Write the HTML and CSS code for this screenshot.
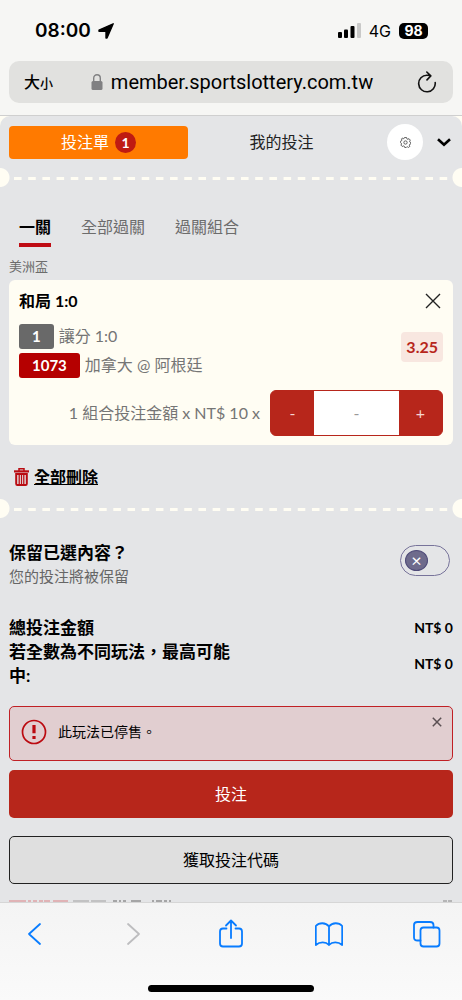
FILE: index.html
```html
<!DOCTYPE html>
<html lang="zh-Hant-TW">
<head>
<meta charset="UTF-8">
<meta name="viewport" content="width=device-width, initial-scale=1">
<title>投注單</title>
<link rel="stylesheet" href="styles.css">
</head>
<body>
  <header class="browser-top">
    <div class="status-bar">
      <div class="status-left">
        <span class="clock">08:00</span>
        <svg width="16" height="16" viewBox="0 0 16 16" aria-hidden="true"><path d="M15.200.8 9 15H8V8.200H1V7.100z" fill="#000" stroke="#000" stroke-width="1.400" stroke-linejoin="round"/></svg>
      </div>
      <div class="status-right">
        <svg width="23" height="15" viewBox="0 0 23 15" aria-hidden="true">
          <rect x="0" y="9" width="4" height="6" rx="1"/>
          <rect x="6" y="6.500" width="4" height="8.500" rx="1"/>
          <rect x="12.500" y="3" width="4" height="12" rx="1"/>
          <rect x="19" y="0" width="4" height="15" rx="1" fill="#c9c9c8"/>
        </svg>
        <span class="network">4G</span>
        <span class="battery">98</span>
      </div>
    </div>
    <div class="address-bar">
      <button class="text-size" aria-label="文字大小">大<small>小</small></button>
      <button class="address">
        <svg width="12" height="16" viewBox="0 0 12 16" aria-hidden="true"><path d="M2.700 7.500V4.300C2.700 2 4.100.8 6 .8s3.300 1.200 3.300 3.500v3.200" fill="none" stroke="#808082" stroke-width="1.400"/><rect x=".5" y="7" width="11" height="9" rx="1.500" fill="#808082"/></svg>
        <span>member.sportslottery.com.tw</span>
      </button>
      <button class="reload" aria-label="重新載入">
        <svg width="20" height="22" viewBox="0 0 20 22" fill="none" stroke="#111" stroke-width="1.600" stroke-linecap="round" stroke-linejoin="round"><path d="M18.200 11.500A8.300 8.300 0 1 1 9.900 4.200q2 0 3.400.4M9.800 1l4 3.900-3.800 4"/></svg>
      </button>
    </div>
  </header>

  <main class="slip-wrap">
    <div class="slip">
      <div class="slip-head">
        <div class="main-tabs">
          <button class="main-tab active">投注單 <span class="count">1</span></button>
          <button class="main-tab">我的投注</button>
        </div>
        <button class="settings" aria-label="設定">
          <svg width="11" height="11" viewBox="0 0 20 20" fill="none" stroke="#555" stroke-width="1.700" stroke-linejoin="round"><path d="M8 1h4l.6 2.500 1.500.7L16.400 3l2.300 2.700-1.200 2 .3 1.500 2 1v2.200l-2.200.9-.7 1.600 1 2.100-2.600 2-1.900-1.200-1.500.5L11.200 19H8.500l-.7-2.200-1.600-.6L4 17.200l-2.300-2.500 1.100-2-.5-1.500L.8 10V7.800l2-.8.7-1.600-.9-2L5.200 2l1.500 1.400z"/><circle cx="10" cy="10" r="3"/></svg>
        </button>
        <button class="collapse" aria-label="收合">
          <svg width="14" height="9" viewBox="0 0 14 9" fill="none" stroke="#000" stroke-width="2.600"><path d="M1 1.200l6 5.600 6-5.600"/></svg>
        </button>
      </div>

      <div class="perforation"></div>

      <nav class="sub-tabs">
        <a href="#single" class="active">一關</a>
        <a href="#all">全部過關</a>
        <a href="#combo">過關組合</a>
      </nav>

      <p class="league">美洲盃</p>
      <section class="bet-card">
        <div class="bet-title">
          <h2>和局 1:0</h2>
          <button aria-label="移除">
            <svg width="20" height="20" viewBox="0 0 20 20" stroke="#222" stroke-width="1.400"><path d="M3 3l14 14M17 3L3 17"/></svg>
          </button>
        </div>
        <div class="bet-body">
          <div class="bet-lines">
            <div class="bet-line"><span class="chip">1</span>讓分 1:0</div>
            <div class="bet-line"><span class="chip code">1073</span>加拿大 @ 阿根廷</div>
          </div>
          <span class="odds">3.25</span>
        </div>
        <div class="stake">
          <label for="stake">1 組合投注金額 x NT$ 10 x</label>
          <div class="stepper">
            <button aria-label="減少">-</button>
            <input id="stake" type="text" placeholder="-">
            <button aria-label="增加">+</button>
          </div>
        </div>
      </section>

      <button class="clear-all">
        <svg width="15" height="18" viewBox="0 0 15 18" fill="none" stroke="#b90c12"><path d="M0 3.400h15" stroke-width="2.200"/><path d="M5 3V.8h5V3" stroke-width="1.500"/><path d="M2.200 6v9.800q0 1.200 1.200 1.200h8.200q1.200 0 1.200-1.200V6z" stroke-width="2"/><path d="M5.200 7v9M7.500 7v9M9.800 7v9" stroke-width="1.300"/></svg>
        <span>全部刪除</span>
      </button>

      <div class="perforation"></div>

      <div class="keep">
        <label for="keep">
          <strong>保留已選內容？</strong>
          <span>您的投注將被保留</span>
        </label>
        <input id="keep" class="switch" type="checkbox" role="switch">
      </div>

      <dl class="totals">
        <div><dt>總投注金額</dt><dd>NT$ 0</dd></div>
        <div><dt>若全數為不同玩法，最高可能中:</dt><dd>NT$ 0</dd></div>
      </dl>

      <div class="alert" role="alert">
        <svg width="26" height="26" viewBox="0 0 26 26"><circle cx="13" cy="13" r="11.500" fill="none" stroke="#bb0a10" stroke-width="1.700"/><path d="M11.400 6h3.200v8.200h-3.200zM11.400 17h3.200v3h-3.200z" fill="#bb0a10"/></svg>
        <span>此玩法已停售。</span>
        <button aria-label="關閉">
          <svg width="10" height="10" viewBox="0 0 10 10" stroke="#5b5053" stroke-width="1.500"><path d="M.8.8l8.400 8.400M9.200.8L.8 9.200"/></svg>
        </button>
      </div>

      <button class="btn primary">投注</button>
      <button class="btn outline">獲取投注代碼</button>

      <div class="next-row">
        <svg width="164" height="2" viewBox="0 0 164 2" aria-hidden="true">
          <path d="M0 1h17M19 1h3M24 1h4M30 1h4M35 1h6M44 1h15" stroke="#e0b3b6" stroke-width="2"/>
          <path d="M64 1h16M82 1h15" stroke="#c2c2c3" stroke-width="2"/>
          <path d="M104 1h4M110 1h2M114 1h3M122 1h10M143 1h2M147 1h6M155 1h3M160 1h2" stroke="#a5a5a6" stroke-width="2"/>
        </svg>
        <svg width="10" height="2" viewBox="0 0 10 2" aria-hidden="true"><path d="M0 1h4M5 1h4" stroke="#b5b5b6" stroke-width="2"/></svg>
      </div>
    </div>
  </main>

  <footer class="browser-bottom">
    <div class="toolbar">
      <button aria-label="上一頁"><svg width="28" height="30" viewBox="0 0 28 30"><path d="M19 5L8 15l11 10"/></svg></button>
      <button aria-label="下一頁" disabled><svg width="28" height="30" viewBox="0 0 28 30"><path d="M9 5l11 10L9 25"/></svg></button>
      <button aria-label="分享"><svg width="28" height="30" viewBox="0 0 28 30"><path d="M9.500 9.500H6Q3 9.500 3 12.500v12q0 3 3 3h16q3 0 3-3v-12q0-3-3-3h-3.500M14 19V1.500M9 6.500l5-5 5 5"/></svg></button>
      <button aria-label="書籤"><svg width="28" height="30" viewBox="0 0 28 30"><path d="M14 7.500C10.500 3 4 3.500.8 7v19c4-3.500 10-3.500 13.200 0 3.200-3.500 9.200-3.500 13.200 0V7C24 3.500 17.500 3 14 7.500zV26"/></svg></button>
      <button aria-label="分頁"><svg width="28" height="30" viewBox="0 0 28 30"><rect x="7.500" y="8.500" width="19" height="19" rx="3"/><path d="M7.500 21.500H4.500Q1 21.500 1 18.500V6Q1 3 4.500 3H17q3.500 0 3.500 3v2.500"/></svg></button>
    </div>
    <div class="home-bar"></div>
  </footer>
</body>
</html>
```

FILE: styles.css
```css
* {
  box-sizing: border-box;
}
body {
  margin: 0;
  min-height: 100vh;
  display: flex;
  flex-direction: column;
  background: #e4e5e7;
  color: #000;
  font-family: Lato, "Noto Sans CJK TC", sans-serif;
  font-size: 16px;
  line-height: 24px;
}
button,
input {
  font: inherit;
  color: inherit;
  margin: 0;
}
button {
  padding: 0;
  border: none;
  background: none;
  cursor: pointer;
}
svg {
  display: block;
  flex: none;
}
h2,
p,
dl,
dd {
  margin: 0;
}

/* browser top */
.browser-top {
  background: #f6f6f4;
  border-bottom: 1px solid #cfcfcf;
  padding: 0 9px 12px;
  font-family: Inter, "Noto Sans CJK TC", sans-serif;
}
.status-bar {
  height: 61px;
  display: flex;
  justify-content: space-between;
  align-items: center;
  padding: 0 25px 0 26px;
}
.status-left,
.status-right {
  display: flex;
  align-items: center;
}
.status-left {
  gap: 7px;
}
.status-right {
  gap: 8px;
}
.clock {
  font-size: 19px;
  font-weight: 600;
}
.network {
  font-size: 16px;
}
.battery {
  width: 29px;
  border-radius: 5px;
  background: #000;
  color: #fff;
  font-size: 14px;
  font-weight: 700;
  line-height: 16px;
  text-align: center;
}
.address-bar {
  height: 42px;
  display: flex;
  align-items: center;
  justify-content: space-between;
  padding: 0 16px 0 15px;
  border-radius: 10px;
  background: #e1e1df;
}
.text-size {
  font-size: 16px;
  font-weight: 500;
}
.text-size small {
  font-size: 13px;
}
.address {
  display: flex;
  align-items: center;
  gap: 8px;
  padding-right: 6px;
  font-family: Roboto, sans-serif;
  font-size: 20px;
}

/* betting slip */
.slip-wrap {
  flex: 1;
  background: #fffdf3;
}
.slip {
  height: 100%;
  display: flex;
  flex-direction: column;
  padding: 8px 9px 0;
  border-radius: 10px 10px 0 0;
  background: #e4e5e7;
}
.slip-head {
  display: flex;
  align-items: center;
}
.main-tabs {
  flex: 1;
  display: grid;
  grid-template-columns: 1fr 1fr;
  gap: 4px;
}
.main-tab {
  height: 33px;
  display: flex;
  align-items: center;
  justify-content: center;
  gap: 6px;
  border-radius: 4px;
  color: #222;
}
.main-tab.active {
  background: #ff7a00;
  color: #fff;
}
.count {
  width: 21px;
  border-radius: 50%;
  background: #bf1b12;
  font-size: 14px;
  font-weight: 700;
  line-height: 21px;
}
.settings {
  width: 36px;
  height: 36px;
  display: grid;
  place-items: center;
  margin: 0 14px 0 16px;
  border-radius: 50%;
  background: #fff;
}
.collapse {
  padding-right: 2px;
}
.perforation {
  height: 19px;
  margin: 8px -9px 0;
  background:
    radial-gradient(circle at 0 50%, #fffdf3 9px, transparent 10px),
    radial-gradient(circle at 100% 50%, #fffdf3 9px, transparent 10px);
}
.perforation::before {
  content: "";
  display: block;
  height: 19px;
  margin: 0 8px 0 14px;
  background: linear-gradient(to right, #fffdf3 50%, transparent 50%) 0 9px / 14px 3px;
  background-repeat: round no-repeat;
}
.sub-tabs {
  display: flex;
  gap: 30px;
  padding: 28px 10px 0;
}
.sub-tabs a {
  padding-bottom: 4px;
  border-bottom: 4px solid transparent;
  color: #6c6c6c;
  text-decoration: none;
}
.sub-tabs a.active {
  border-color: #bf0c14;
  color: #000;
  font-weight: 700;
}
.league {
  padding: 9px 0 4px;
  color: #6c6c6c;
  font-size: 13px;
  line-height: 20px;
}

.bet-card {
  padding: 9px 10px;
  border-radius: 6px;
  background: #fffdf3;
  color: #757575;
}
.bet-title {
  display: flex;
  justify-content: space-between;
  align-items: center;
  color: #000;
}
.bet-title h2 {
  font-size: 16px;
  line-height: 24px;
}
.bet-body {
  display: flex;
  justify-content: space-between;
  align-items: flex-start;
  padding: 10px 0 12px;
}
.bet-line {
  display: flex;
  align-items: center;
  gap: 5px;
  height: 26px;
}
.bet-line + .bet-line {
  margin-top: 3px;
}
.chip {
  min-width: 34px;
  padding: 0 13px;
  border-radius: 3px;
  background: #696969;
  color: #fff;
  font-size: 15px;
  font-weight: 700;
  line-height: 25px;
  text-align: center;
}
.chip.code {
  background: #b50000;
}
.odds {
  margin-top: 9px;
  padding: 3px 5px;
  border-radius: 4px;
  background: #f8e7e0;
  color: #b7261b;
  font-weight: 700;
}
.stake {
  display: flex;
  align-items: center;
  justify-content: flex-end;
  gap: 10px;
}
.stepper {
  width: 173px;
  height: 46px;
  display: flex;
  overflow: hidden;
  border: 1px solid #b7261b;
  border-radius: 6px;
  background: #b7261b;
}
.stepper button {
  width: 43px;
  color: #f5d5d0;
}
.stepper input {
  flex: 1;
  min-width: 0;
  padding: 0;
  border: none;
  background: #fff;
  text-align: center;
}
.stepper input::placeholder {
  color: #999;
}

.clear-all {
  align-self: flex-start;
  display: flex;
  align-items: center;
  gap: 5px;
  margin: 20px 0 2px 5px;
  font-weight: 700;
  text-decoration: underline;
}

.keep {
  display: flex;
  justify-content: space-between;
  align-items: flex-start;
  padding: 23px 3px 0 0;
}
.keep label strong,
.keep label span {
  display: block;
}
.keep label strong {
  font-size: 17px;
}
.keep label span {
  color: #666;
  font-size: 15px;
  line-height: 22px;
}
.switch {
  appearance: none;
  width: 50px;
  height: 31px;
  margin-top: 4px;
  padding: 4px;
  border: 1px solid #77739a;
  border-radius: 16px;
}
.switch::before {
  content: "×";
  display: block;
  width: 21px;
  border: 1px solid #4f4b78;
  border-radius: 50%;
  background: #6e6b8c;
  color: #fff;
  font-size: 18px;
  line-height: 19px;
  text-align: center;
}
.totals {
  padding: 29px 0 18px;
  font-size: 17px;
  font-weight: 700;
}
.totals div {
  display: flex;
  justify-content: space-between;
  align-items: center;
}
.totals dt {
  width: 52%;
}
.totals dd {
  font-size: 14px;
}

.alert {
  display: flex;
  align-items: center;
  gap: 11px;
  min-height: 55px;
  padding: 0 10px 4px 11px;
  border: 1px solid #c02025;
  border-radius: 5px;
  background: #e1ced0;
  font-size: 14px;
}
.alert button {
  align-self: flex-start;
  margin: 10px 0 0 auto;
}
.btn {
  height: 48px;
  border-radius: 5px;
}
.btn.primary {
  margin: 9px 0 18px;
  background: #b7261b;
  color: #fff;
}
.btn.outline {
  border: 1px solid #222;
  background: #dfdfdf;
}
/* top edge of the row cut off by the toolbar */
.next-row {
  display: flex;
  justify-content: space-between;
  margin-top: 16px;
}

/* browser bottom */
.browser-bottom {
  padding: 16px 18px 9px;
  border-top: 1px solid #d6d6d6;
  background: linear-gradient(#f4f4f4, #fafafa);
}
.toolbar {
  display: flex;
  justify-content: space-between;
  padding: 0 3px;
}
.toolbar svg {
  fill: none;
  stroke: #087cff;
  stroke-width: 1.8;
  stroke-linecap: round;
  stroke-linejoin: round;
}
.toolbar button:disabled svg {
  stroke: #bdbdbf;
}
.home-bar {
  width: 39%;
  height: 7px;
  margin: 36px auto 0;
  border-radius: 4px;
  background: #000;
}
```
